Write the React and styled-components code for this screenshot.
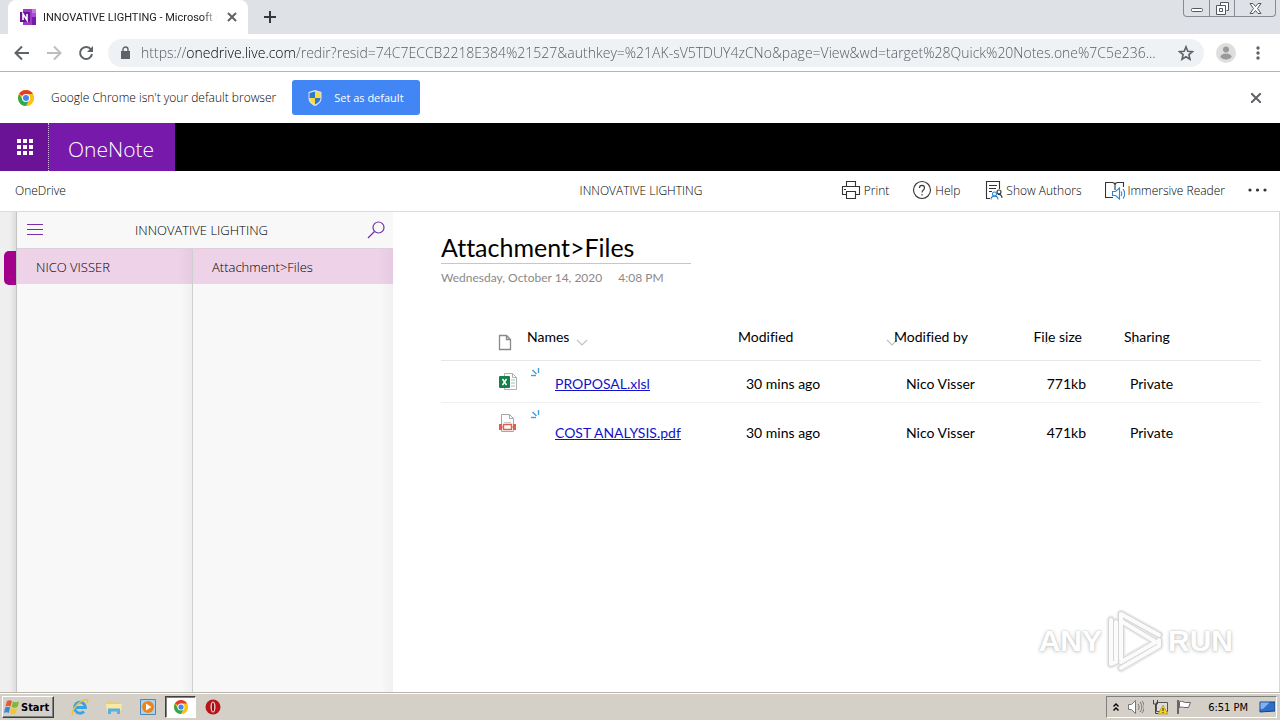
import React from 'react';
import styled, { createGlobalStyle } from 'styled-components';

const GlobalStyle = createGlobalStyle`
  * {
    box-sizing: border-box;
  }
  body {
    margin: 0;
    font-family: 'Open Sans', 'Noto Sans', sans-serif;
    font-size: 12px;
    color: #222;
    background: #fff;
  }
  button,
  input {
    font: inherit;
    color: inherit;
    border: 0;
    margin: 0;
    padding: 0;
    background: none;
  }
  svg {
    display: block;
    flex: none;
  }
`;

const Screen = styled.div`
  display: flex;
  flex-direction: column;
  min-height: 100vh;
`;

/* browser */
const TabStrip = styled.div`
  display: flex;
  align-items: flex-start;
  height: 34px;
  padding-left: 8px;
  background: #dee1e6;
`;
const Tab = styled.div`
  display: flex;
  align-items: center;
  gap: 7px;
  width: 240px;
  height: 34px;
  padding: 0 8px 0 12px;
  border-radius: 8px 8px 0 0;
  background: #fff;
`;
const TabTitle = styled.span`
  flex: 1;
  min-width: 0;
  white-space: nowrap;
  font-family: Roboto, 'Open Sans', sans-serif;
  font-size: 11px;
  color: #222;
  mask-image: linear-gradient(90deg, #000 92%, transparent);
`;
const IconButton = styled.button`
  display: flex;
  align-items: center;
  justify-content: center;
  flex: none;
  width: ${p => p.$size || 16}px;
  height: ${p => p.$size || 16}px;
`;
const NewTab = styled(IconButton)`
  margin: 5px 0 0 10px;
`;
const WindowButtons = styled.div`
  display: flex;
  height: 17px;
  margin: 0 4px 0 auto;
  border: 1px solid #888c92;
  border-top: 0;
  border-radius: 0 0 4px 4px;
`;
const WindowButton = styled.button`
  display: flex;
  align-items: center;
  justify-content: center;
  width: ${p => p.$width}px;
  & + & {
    border-left: 1px solid #888c92;
  }
`;
const Toolbar = styled.div`
  display: flex;
  align-items: center;
  gap: 12px;
  height: 38px;
  padding: 0 12px;
  border-bottom: 1px solid #b4b4b4;
  background: #fff;
`;
const AddressBar = styled.label`
  display: flex;
  flex: 1;
  align-items: center;
  gap: 8px;
  height: 28px;
  padding: 0 10px;
  border-radius: 14px;
  background: #eff2f4;
`;
const Address = styled.input`
  flex: 1;
  min-width: 0;
  height: 24px;
  font-size: 14px;
  font-weight: 300;
  color: transparent;
  background: linear-gradient(
    90deg,
    #50555a 46px,
    #000 46px,
    #000 154px,
    #50555a 154px
  );
  background-clip: text;
  outline: 0;
`;
const InfoBar = styled.div`
  display: flex;
  align-items: center;
  height: 51px;
  padding: 0 16px 0 18px;
  font-weight: 300;
  color: #000;
  background: #fff;
`;
const InfoText = styled.span`
  margin: 0 16px 0 17px;
`;
const DefaultButton = styled.button`
  display: flex;
  align-items: center;
  gap: 12px;
  height: 35px;
  padding: 0 16px;
  border-radius: 3px;
  font-size: 11px;
  font-weight: 400;
  color: #fff;
  background: #4285f4;
`;
const InfoClose = styled(IconButton)`
  margin-left: auto;
`;

/* onenote */
const Suite = styled.header`
  display: flex;
  height: 48px;
  background: #000;
`;
const Waffle = styled.button`
  display: flex;
  align-items: center;
  justify-content: center;
  width: 49px;
  padding-left: 2px;
  border-right: 1px dotted #d9b8ee;
  background: #6a1397;
`;
const SuiteName = styled.a`
  display: flex;
  align-items: center;
  padding: 4px 21px 0 19px;
  font-size: 21px;
  font-weight: 300;
  color: #fff;
  text-decoration: none;
  background: #7719aa;
`;
const CommandBar = styled.nav`
  display: grid;
  grid-template-columns: 1fr auto 1fr;
  align-items: center;
  height: 41px;
  padding: 0 13px 2px 15px;
  border-bottom: 1px solid #dcdcdc;
  font-weight: 300;
  color: #000;
`;
const DriveLink = styled.a`
  color: inherit;
  text-decoration: none;
`;
const Commands = styled.div`
  display: flex;
  justify-content: flex-end;
  align-items: center;
  gap: 23px;
`;
const Command = styled.button`
  display: flex;
  align-items: center;
  gap: 3px;
  white-space: nowrap;
`;
const Workspace = styled.main`
  position: relative;
  display: flex;
  flex: 1;
`;
const Spine = styled.div`
  width: 17px;
  padding: 39px 0 0 4px;
  border-right: 1px solid #c4c4c4;
  background: linear-gradient(90deg, #efefef 60%, #dcdcdc);
`;
const SectionTab = styled.div`
  height: 34px;
  border-radius: 5px 0 0 5px;
  background: #a3008c;
`;
const Side = styled.aside`
  display: flex;
  flex-direction: column;
  width: 376px;
  font-size: 13px;
  font-weight: 300;
  color: #000;
  background: #f8f8f8;
`;
const SideHeader = styled.div`
  display: flex;
  align-items: center;
  height: 37px;
  padding: 0 8px 0 9px;
  border-bottom: 1px solid #dfcfdc;
`;
const SideTitle = styled.span`
  flex: 1;
  padding-right: 8px;
  text-align: center;
`;
const SideColumns = styled.div`
  display: grid;
  flex: 1;
  grid-template-columns: 176px 1fr;
`;
const SideList = styled.div`
  border-right: ${p => (p.$divider ? '1px solid #cfcfcf' : '0')};
  background: linear-gradient(90deg, #f8f8f8 94%, #f0f0f0);
`;
const SideItem = styled.a`
  display: flex;
  align-items: center;
  height: 35px;
  padding: 0 20px 0 19px;
  color: #000;
  text-decoration: none;
  background: linear-gradient(90deg, #edd2e8 92%, #e6cae1);
`;
const Page = styled.section`
  flex: 1;
  padding: 20px 18px 0 48px;
  border-right: 1px solid #d8d8d8;
  font-family: Lato, 'Open Sans', sans-serif;
  font-variant-ligatures: none;
`;
const PageTitle = styled.h1`
  width: 250px;
  height: 32px;
  margin: 0;
  border-bottom: 1px solid #c4c8c8;
  font-size: 25px;
  font-weight: 400;
  line-height: 30px;
  color: #000;
`;
const PageDate = styled.p`
  display: flex;
  gap: 16px;
  margin: 6px 0 0;
  font-size: 12px;
  line-height: 16px;
  color: #8a8a8a;
`;

const FileTable = styled.table`
  width: 100%;
  margin-top: 34px;
  border-collapse: collapse;
  table-layout: fixed;
  font-size: 14px;
  color: #000;
`;
const Col = styled.col`
  width: ${p => p.$width}px;
`;
const Head = styled.th`
  position: relative;
  height: 40px;
  padding: 0 ${p => p.$right || 0}px 6px 0;
  border-bottom: 1px solid #e6e6e6;
  font-weight: 400;
  text-align: ${p => (p.$right ? 'right' : 'left')};
`;
const Cell = styled.td`
  height: ${p => p.$height}px;
  padding: 0 ${p => p.$right || 0}px 10px ${p => p.$inset || 0}px;
  border-bottom: 1px solid ${p => (p.$last ? 'transparent' : '#f0f0f0')};
  text-align: ${p => (p.$right ? 'right' : 'left')};
  vertical-align: bottom;
`;
const MarkCell = styled(Cell)`
  padding: ${p => p.$top}px 0 0 ${p => p.$inset}px;
  vertical-align: top;
`;
const FileLink = styled.a`
  color: #1212c8;
`;
const SortMark = styled.span`
  position: absolute;
  top: ${p => p.$top || 16}px;
  left: ${p => p.$left}px;
`;
const HeadLabel = styled.span`
  position: relative;
  z-index: 1;
`;

const Watermark = styled.div`
  position: absolute;
  right: 47px;
  bottom: 18px;
  display: flex;
  align-items: center;
  gap: 4px;
  font-family: 'Liberation Sans', sans-serif;
  font-size: 30px;
  font-weight: 700;
  color: #fff;
  text-shadow: 0 0 2px #bbb, 0 1px 4px #ccc;
  pointer-events: none;
`;

/* windows taskbar */
const Taskbar = styled.footer`
  display: flex;
  align-items: center;
  height: 28px;
  padding: 2px 3px 1px 2px;
  border-top: 1px solid #b8b4ac;
  box-shadow: inset 0 1px #fff;
  background: #d4d0c8;
`;
const Start = styled.button`
  display: flex;
  align-items: center;
  gap: 1px;
  width: 52px;
  height: 22px;
  padding-left: 1px;
  border: 1px solid;
  border-color: #fff #404040 #404040 #fff;
  box-shadow: inset -1px -1px #808080;
  font-family: 'DejaVu Sans Condensed', 'DejaVu Sans', sans-serif;
  font-size: 11px;
  font-weight: 700;
  color: #000;
`;
const Apps = styled.div`
  display: flex;
  align-items: center;
  margin-left: 9px;
`;
const AppButton = styled.button`
  display: flex;
  align-items: center;
  justify-content: center;
  width: ${p => (p.$active ? 31 : 34)}px;
  height: 22px;
  border: ${p => (p.$active ? '1px solid' : '0')};
  border-color: #404040 #fff #fff #404040;
  box-shadow: ${p => (p.$active ? 'inset 1px 1px #808080' : 'none')};
  background: ${p => (p.$active ? '#fff' : 'none')};
`;
const Tray = styled.div`
  display: flex;
  align-items: center;
  height: 22px;
  margin-left: auto;
  padding: 0 1px 0 5px;
  gap: 8px;
  border: 1px solid;
  border-color: #808080 #fff #fff #808080;
  font-family: 'DejaVu Sans Condensed', 'DejaVu Sans', sans-serif;
  font-size: 11px;
  color: #000;
`;
const Clock = styled.time`
  margin: 0 3px 0 8px;
`;

const Stroke = ({ size = 16, box = 16, color = '#5f6368', width = 2, children }) => (
  <svg
    width={size}
    height={size}
    viewBox={`0 0 ${box} ${box}`}
    fill="none"
    stroke={color}
    strokeWidth={width}
  >
    {children}
  </svg>
);

const ChromeLogo = ({ size }) => (
  <svg width={size} height={size} viewBox="0 0 16 16">
    <circle cx="8" cy="8" r="8" fill="#fbc116" />
    <path d="M8 8 1.1 4A8 8 0 0 1 14.9 4z" fill="#e33b2e" />
    <path d="M1.1 4A8 8 0 0 0 8 16l3.5-6L8 8 4.5 10z" fill="#2da94f" />
    <path d="M8 4h6.9A8 8 0 0 1 8 16l3.5-6z" fill="#fbc116" />
    <circle cx="8" cy="8" r="4" fill="#fff" />
    <circle cx="8" cy="8" r="3" fill="#4285f4" />
  </svg>
);

const OneNoteLogo = () => (
  <svg width="16" height="16" viewBox="0 0 16 16">
    <path d="M3 0h13v16H3z" fill="#c776e6" />
    <path d="M3 0h9v16H3z" fill="#9a3fc4" />
    <path d="M12 4h4v4h-4z" fill="#ae4bd5" />
    <path d="M12 8h4v8h-4z" fill="#7719aa" />
    <path d="M0 3h10v10H0z" fill="#6b1499" />
    <path d="M3 11V5l4 6V5" fill="none" stroke="#fff" strokeWidth="1.6" />
  </svg>
);

const Shield = () => (
  <svg width="14" height="16" viewBox="0 0 14 16">
    <path d="M7 0l6.5 2v6c0 4-3 6.5-6.5 8C3.5 14.5.5 12 .5 8V2z" fill="#d8e3ee" />
    <path d="M7 1.5V8H1.5V3z" fill="#2f78d0" />
    <path d="M7 1.5V8h5.5V3z" fill="#fadb3c" />
    <path d="M7 8H1.5c0 3 2.5 5.2 5.5 6.5z" fill="#fadb3c" />
    <path d="M7 8h5.5c0 3-2.5 5.2-5.5 6.5z" fill="#2f78d0" />
  </svg>
);

const Chevron = ({ size = 12 }) => (
  <Stroke size={size} box={12} color="#c2c2c2" width={1.2}>
    <path d="M1 4l5 5 5-5" />
  </Stroke>
);

const SyncMark = () => (
  <svg width="10" height="9" viewBox="0 0 10 9" fill="none" stroke="#4a9ad4">
    <path d="M8.5 0v5M2.5 2l4 4" strokeWidth="1.4" />
    <path d="M1 7.5h5" strokeWidth="1.4" />
  </svg>
);

const ExcelIcon = () => (
  <svg width="19" height="19" viewBox="0 0 19 19">
    <path d="M5.5 1.5h8l4 4v12h-12z" fill="#fff" stroke="#b0b0b0" />
    <path d="M13.5 1.5v4h4" fill="none" stroke="#b0b0b0" />
    <path d="M12 8h4M12 11h4M12 14h4" stroke="#9fc9b0" />
    <rect y="4" width="11" height="12" rx="1" fill="#15804a" />
    <path d="M3.5 7l4 6M7.5 7l-4 6" stroke="#fff" strokeWidth="1.5" />
  </svg>
);

const PdfIcon = () => (
  <svg width="17" height="19" viewBox="0 0 17 19">
    <path d="M2.5.5h8l4 4v13h-12z" fill="#fff" stroke="#a6a6a6" />
    <path d="M10.5.5v4h4" fill="none" stroke="#a6a6a6" />
    <path d="M5 8.5h7" stroke="#c9c9c9" />
    <path d="M0 10h3v6H0zM14 10h3v6h-3z" fill="#e0604c" />
    <path d="M4.5 10.5h8v5h-8z" fill="#fff" stroke="#e0604c" strokeWidth="1.4" />
    <path d="M3 13h1.5M12.5 13H14" stroke="#e0604c" />
  </svg>
);

const files = [
  {
    name: 'PROPOSAL.xlsl',
    icon: <ExcelIcon />,
    modified: '30 mins ago',
    by: 'Nico Visser',
    size: '771kb',
    sharing: 'Private',
    height: 42,
  },
  {
    name: 'COST ANALYSIS.pdf',
    icon: <PdfIcon />,
    modified: '30 mins ago',
    by: 'Nico Visser',
    size: '471kb',
    sharing: 'Private',
    height: 49,
    last: true,
  },
];

const Browser = () => (
  <>
    <TabStrip>
      <Tab>
        <OneNoteLogo />
        <TabTitle>INNOVATIVE LIGHTING - Microsoft O</TabTitle>
        <IconButton aria-label="Close tab">
          <Stroke size={10} box={10}>
            <path d="M1 1l8 8M9 1L1 9" />
          </Stroke>
        </IconButton>
      </Tab>
      <NewTab $size={24} aria-label="New tab">
        <Stroke size={12} box={12} color="#35383b">
          <path d="M6 0v12M0 6h12" />
        </Stroke>
      </NewTab>
      <WindowButtons>
        <WindowButton $width={25} aria-label="Minimize">
          <svg width="12" height="12" viewBox="0 0 12 12">
            <rect x=".5" y="6.5" width="11" height="3" rx="1" fill="#fff" stroke="#55585e" />
          </svg>
        </WindowButton>
        <WindowButton $width={25} aria-label="Restore">
          <Stroke size={13} box={13} color="#55585e" width={1}>
            <path d="M4.5 3.5v-3h8v8h-2" fill="#fff" />
            <path d="M.5 3.5h9v9h-9z" fill="#fff" />
            <path d="M3.5 6.5h3v3h-3z" />
          </Stroke>
        </WindowButton>
        <WindowButton $width={41} aria-label="Close">
          <svg width="13" height="11" viewBox="0 0 13 11">
            <path
              d="M1 .5h3l2.5 3 2.5-3h3L8.500 5.500l3.500 5H9l-2.500-3-2.500 3H1l3.500-5z"
              fill="#fff"
              stroke="#55585e"
            />
          </svg>
        </WindowButton>
      </WindowButtons>
    </TabStrip>
    <Toolbar>
      <IconButton $size={20} aria-label="Back">
        <Stroke>
          <path d="M15 8H2M8 1.5L1.5 8 8 14.5" />
        </Stroke>
      </IconButton>
      <IconButton $size={20} aria-label="Forward">
        <Stroke color="#bbbdbf">
          <path d="M1 8h13M8 1.5L14.5 8 8 14.5" />
        </Stroke>
      </IconButton>
      <IconButton $size={20} aria-label="Reload">
        <Stroke>
          <path d="M13 4.5A6 6 0 1 0 14 9" />
          <path d="M15 1v6H9z" fill="#5f6368" stroke="none" />
        </Stroke>
      </IconButton>
      <AddressBar>
        <svg width="15" height="14" viewBox="0 0 15 14">
          <path d="M3 5h9v8H3z" fill="#5f6368" />
          <path d="M5 6V3.5a2.5 2.5 0 0 1 5 0V6" fill="none" stroke="#5f6368" strokeWidth="1.4" />
        </svg>
        <Address
          aria-label="Address"
          defaultValue="https://onedrive.live.com/redir?resid=74C7ECCB2218E384%21527&authkey=%21AK-sV5TDUY4zCNo&page=View&wd=target%28Quick%20Notes.one%7C5e236..."
        />
        <IconButton aria-label="Bookmark">
          <Stroke width={1.6}>
            <path d="M8 1.800l1.800 4.400 4.700.4-3.600 3 1.100 4.600L8 11.700l-4 2.500 1.100-4.600-3.600-3 4.700-.4z" />
          </Stroke>
        </IconButton>
      </AddressBar>
      <IconButton $size={20} aria-label="Profile">
        <svg width="20" height="20" viewBox="0 0 20 20">
          <circle cx="10" cy="10" r="10" fill="#dedede" />
          <circle cx="10" cy="6.5" r="3" fill="#9a9a9a" />
          <ellipse cx="10" cy="13.5" rx="5.5" ry="3" fill="#9a9a9a" />
        </svg>
      </IconButton>
      <IconButton $size={20} aria-label="Menu">
        <svg width="4" height="14" viewBox="0 0 4 14" fill="#5f6368">
          <circle cx="2" cy="2" r="1.7" />
          <circle cx="2" cy="7" r="1.7" />
          <circle cx="2" cy="12" r="1.7" />
        </svg>
      </IconButton>
    </Toolbar>
    <InfoBar>
      <ChromeLogo size={16} />
      <InfoText>Google Chrome isn't your default browser</InfoText>
      <DefaultButton>
        <Shield />
        Set as default
      </DefaultButton>
      <InfoClose aria-label="Dismiss">
        <Stroke size={10} box={10}>
          <path d="M0 0l10 10M10 0L0 10" />
        </Stroke>
      </InfoClose>
    </InfoBar>
  </>
);

const OneNoteBars = () => (
  <>
    <Suite>
      <Waffle aria-label="App launcher">
        <svg width="16" height="16" viewBox="0 0 16 16" fill="#fff">
          {[0, 6, 12].map(y =>
            [0, 6, 12].map(x => (
              <rect key={`${x}-${y}`} x={x} y={y} width="4" height="4" />
            ))
          )}
        </svg>
      </Waffle>
      <SuiteName href="#onenote">OneNote</SuiteName>
    </Suite>
    <CommandBar>
      <DriveLink href="#onedrive">OneDrive</DriveLink>
      <span>INNOVATIVE LIGHTING</span>
      <Commands>
        <Command>
          <Stroke size={20} box={20} color="#333" width={1.1}>
            <path d="M5.5 6.5v-5h9v5M5.5 14.5h-4v-8h17v8h-4" />
            <path d="M5.5 11.5h9v7h-9zM3 9.5h2" />
          </Stroke>
          Print
        </Command>
        <Command>
          <Stroke size={20} box={20} color="#333" width={1.1}>
            <circle cx="10" cy="10" r="8.5" />
            <path d="M7.5 8c0-3.5 5-3.5 5 0 0 2-2.5 2-2.5 4.5M10 14v1.5" />
          </Stroke>
          Help
        </Command>
        <Command>
          <Stroke size={20} box={20} color="#333" width={1.1}>
            <path d="M7 18.5H3.5v-17h13V9M6 5.5h8M6 8.5h7M6 11.5h3" />
            <circle cx="16" cy="12" r="2" />
            <path d="M15 14.5c3-.5 4 1.5 4 3.5" />
            <g stroke="#2b88d8">
              <circle cx="11.5" cy="14" r="2" />
              <path d="M8 19.5c0-4.5 7-4.5 7 0" />
            </g>
          </Stroke>
          Show Authors
        </Command>
        <Command>
          <Stroke size={20} box={20} color="#333" width={1.1}>
            <path d="M8 17.5H.5v-15H7c2 0 3 1 3 2.5V10M10 5c0-1.5 1-2.5 3-2.5h5.500V7" />
            <g stroke="#2b88d8">
              <path d="M7.5 11.5h3l4-3.5v11l-4-3.5h-3z" />
              <path d="M16 11.5c1 1.5 1 3 0 4.5M18 9c2.2 3 2.2 6.5 0 9.5" />
            </g>
          </Stroke>
          Immersive Reader
        </Command>
        <Command aria-label="More">
          <svg width="19" height="4" viewBox="0 0 19 4" fill="#333">
            <circle cx="2" cy="2" r="1.6" />
            <circle cx="9.5" cy="2" r="1.6" />
            <circle cx="17" cy="2" r="1.6" />
          </svg>
        </Command>
      </Commands>
    </CommandBar>
  </>
);

const Files = () => (
  <FileTable>
    <colgroup>
      <Col $width={86} />
      <Col $width={28} />
      <Col $width={183} />
      <Col $width={156} />
      <Col $width={138} />
      <Col $width={92} />
      <Col />
    </colgroup>
    <thead>
      <tr>
        <Head aria-label="Type">
          <SortMark $left={56} $top={14}>
            <Stroke size={18} box={18} color="#8a8a8a" width={1.3}>
              <path d="M2.5 1.5h7l4 4v10h-11zM9.5 1.5v4h4" />
            </Stroke>
          </SortMark>
        </Head>
        <Head colSpan={2}>
          <HeadLabel>Names</HeadLabel>
          <SortMark $left={49}>
            <Chevron />
          </SortMark>
        </Head>
        <Head>
          <HeadLabel>Modified</HeadLabel>
        </Head>
        <Head>
          <SortMark $left={-8}>
            <Chevron />
          </SortMark>
          <HeadLabel>Modified by</HeadLabel>
        </Head>
        <Head $right={42}>
          <SortMark $left={11} $top={18}>
            <Chevron size={8} />
          </SortMark>
          <HeadLabel>File size</HeadLabel>
        </Head>
        <Head>
          <SortMark $left={5} $top={18}>
            <Chevron size={8} />
          </SortMark>
          <HeadLabel>Sharing</HeadLabel>
        </Head>
      </tr>
    </thead>
    <tbody>
      {files.map(({ name, icon, modified, by, size, sharing, height, last }) => (
        <tr key={name}>
          <MarkCell $top={11} $inset={58} $height={height} $last={last}>
            {icon}
          </MarkCell>
          <MarkCell $top={7} $inset={3} $last={last}>
            <SyncMark />
          </MarkCell>
          <Cell $last={last}>
            <FileLink href={`#${name}`}>{name}</FileLink>
          </Cell>
          <Cell $inset={8} $last={last}>
            {modified}
          </Cell>
          <Cell $inset={12} $last={last}>
            {by}
          </Cell>
          <Cell $right={38} $last={last}>
            {size}
          </Cell>
          <Cell $inset={6} $last={last}>
            {sharing}
          </Cell>
        </tr>
      ))}
    </tbody>
  </FileTable>
);

const Notebook = () => (
  <Workspace>
    <Spine>
      <SectionTab />
    </Spine>
    <Side>
      <SideHeader>
        <IconButton $size={18} aria-label="Navigation">
          <Stroke size={16} box={16} color="#7a2fa8" width={1}>
            <path d="M0 2.5h16M0 7.5h16M0 12.5h16" />
          </Stroke>
        </IconButton>
        <SideTitle>INNOVATIVE LIGHTING</SideTitle>
        <IconButton $size={18} aria-label="Search">
          <Stroke size={18} box={18} color="#7a2fa8" width={1.2}>
            <circle cx="11.5" cy="6.5" r="5.5" />
            <path d="M7.5 10.5L1 17" />
          </Stroke>
        </IconButton>
      </SideHeader>
      <SideColumns>
        <SideList $divider>
          <SideItem href="#section">NICO VISSER</SideItem>
        </SideList>
        <SideList>
          <SideItem href="#page">Attachment&gt;Files</SideItem>
        </SideList>
      </SideColumns>
    </Side>
    <Page>
      <PageTitle>Attachment&gt;Files</PageTitle>
      <PageDate>
        <span>Wednesday, October 14, 2020</span>
        <span>4:08 PM</span>
      </PageDate>
      <Files />
    </Page>
    <Watermark>
      <span>ANY</span>
      <svg width="58" height="66" viewBox="0 0 58 66" fill="none" strokeLinejoin="round" strokeLinecap="round">
        {[
          ['#ececec', 9],
          ['#d6d6d6', 6],
          ['#fbfbfb', 4],
        ].map(([color, width]) => (
          <g key={color} stroke={color} strokeWidth={width}>
            <path d="M5 12v44l5-2V14" />
            <path d="M15 51V6l38 21" />
            <path d="M15 13l35 21-35 20M15 60l38-22v-6" />
          </g>
        ))}
      </svg>
      <span>RUN</span>
    </Watermark>
  </Workspace>
);

const WindowsBar = () => (
  <Taskbar>
    <Start>
      <svg width="16" height="16" viewBox="0 0 16 16">
        <path d="M3 2c2-1 3-1 5 0L6.500 7.500c-2-1-3-1-5 0z" fill="#e8582a" />
        <path d="M9 2.500c2 1 3.500 1 6 0L13.500 8c-2 1-4 1-6 0z" fill="#7cb83b" />
        <path d="M1.200 8.500c2-1 3-1 5 0L4.800 14c-2-1-3-1-4.800 0z" fill="#3f86d8" />
        <path d="M7.200 9c2 1 4 1 6 0l-1.500 5.500c-2 1-4 1-6 0z" fill="#f7c52c" />
      </svg>
      Start
    </Start>
    <Apps>
      <AppButton aria-label="Internet Explorer">
        <svg width="18" height="18" viewBox="0 0 18 18" fill="none">
          <path d="M4 9.500h10.500a5.500 5.500 0 1 0-1.500 4" stroke="#38a3e6" strokeWidth="2.8" />
          <path d="M2 16.500C-1 14 8 2 15.500 1.500c2 0 1.500 2 .5 3.500" stroke="#edc33c" strokeWidth="1.5" />
        </svg>
      </AppButton>
      <AppButton aria-label="Explorer">
        <svg width="16" height="16" viewBox="0 0 16 16">
          <path d="M1 2h5l1 1.500h7V11H1z" fill="#e9cf6f" />
          <path d="M0 5h16l-1 7H1z" fill="#f7e9a3" />
          <path d="M2 15V9.500h12V15h-3v-2.500H5V15z" fill="#58b0df" />
        </svg>
      </AppButton>
      <AppButton aria-label="Media Player">
        <svg width="16" height="16" viewBox="0 0 16 16">
          <path d="M.5.5h15v15H.5z" fill="#a9d3f2" stroke="#4f86b5" />
          <circle cx="8" cy="8" r="6" fill="#f08316" />
          <path d="M6 4.500v7L11.500 8z" fill="#fff" />
        </svg>
      </AppButton>
      <AppButton $active aria-label="Chrome">
        <ChromeLogo size={14} />
      </AppButton>
      <AppButton aria-label="Opera">
        <svg width="16" height="16" viewBox="0 0 16 16">
          <circle cx="8" cy="8" r="7.5" fill="#b8141a" />
          <ellipse cx="8" cy="8" rx="2.5" ry="5.5" fill="#f3d9d6" />
          <ellipse cx="8" cy="8" rx="1.2" ry="4.5" fill="#8d0f14" />
        </svg>
      </AppButton>
    </Apps>
    <Tray>
      <Stroke size={8} box={8} color="#000" width={1.4}>
        <path d="M1.500 3.500L4 1l2.500 2.500M1.500 7.500L4 5l2.500 2.500" />
      </Stroke>
      <Stroke size={16} box={16} color="#777" width={1}>
        <path d="M.5 5.500h3l4-4v13l-4-4h-3z" fill="#fff" />
        <path d="M10 5c1.500 2 1.500 4 0 6M12 3c2.500 3 2.500 7 0 10M14 2c3 4 3 8 0 12" />
      </Stroke>
      <svg width="16" height="16" viewBox="0 0 16 16">
        <path d="M4.500 3.500h11v9h-11z" fill="#ddd" stroke="#555" />
        <path d="M1.500 1v4h4V1M3.500 5v9.500h3" fill="none" stroke="#444" />
        <path d="M11 6l5 9H6z" fill="#f5d21f" stroke="#a88a00" strokeWidth=".6" />
        <path d="M11 9v3M11 13v1" stroke="#222" />
      </svg>
      <Stroke size={16} box={16} color="#666" width={1}>
        <path d="M2 1v14" strokeWidth="2" />
        <path d="M3.500 2.500c3-1 4 1 6 1h5l-2 5H9c-2 0-3-1-5.500 0z" fill="#fff" />
      </Stroke>
      <Clock>6:51 PM</Clock>
      <svg width="16" height="14" viewBox="0 0 16 14">
        <path d="M1 2h15v9L1 12z" fill="#2f6fc9" stroke="#1a3f7d" />
        <path d="M1.500 2.500h9l-6 6-3 1z" fill="#7fb2ee" />
      </svg>
    </Tray>
  </Taskbar>
);

const App = () => {
  return (
    <Screen>
      <GlobalStyle />
      <Browser />
      <OneNoteBars />
      <Notebook />
      <WindowsBar />
    </Screen>
  );
};

export default App;
